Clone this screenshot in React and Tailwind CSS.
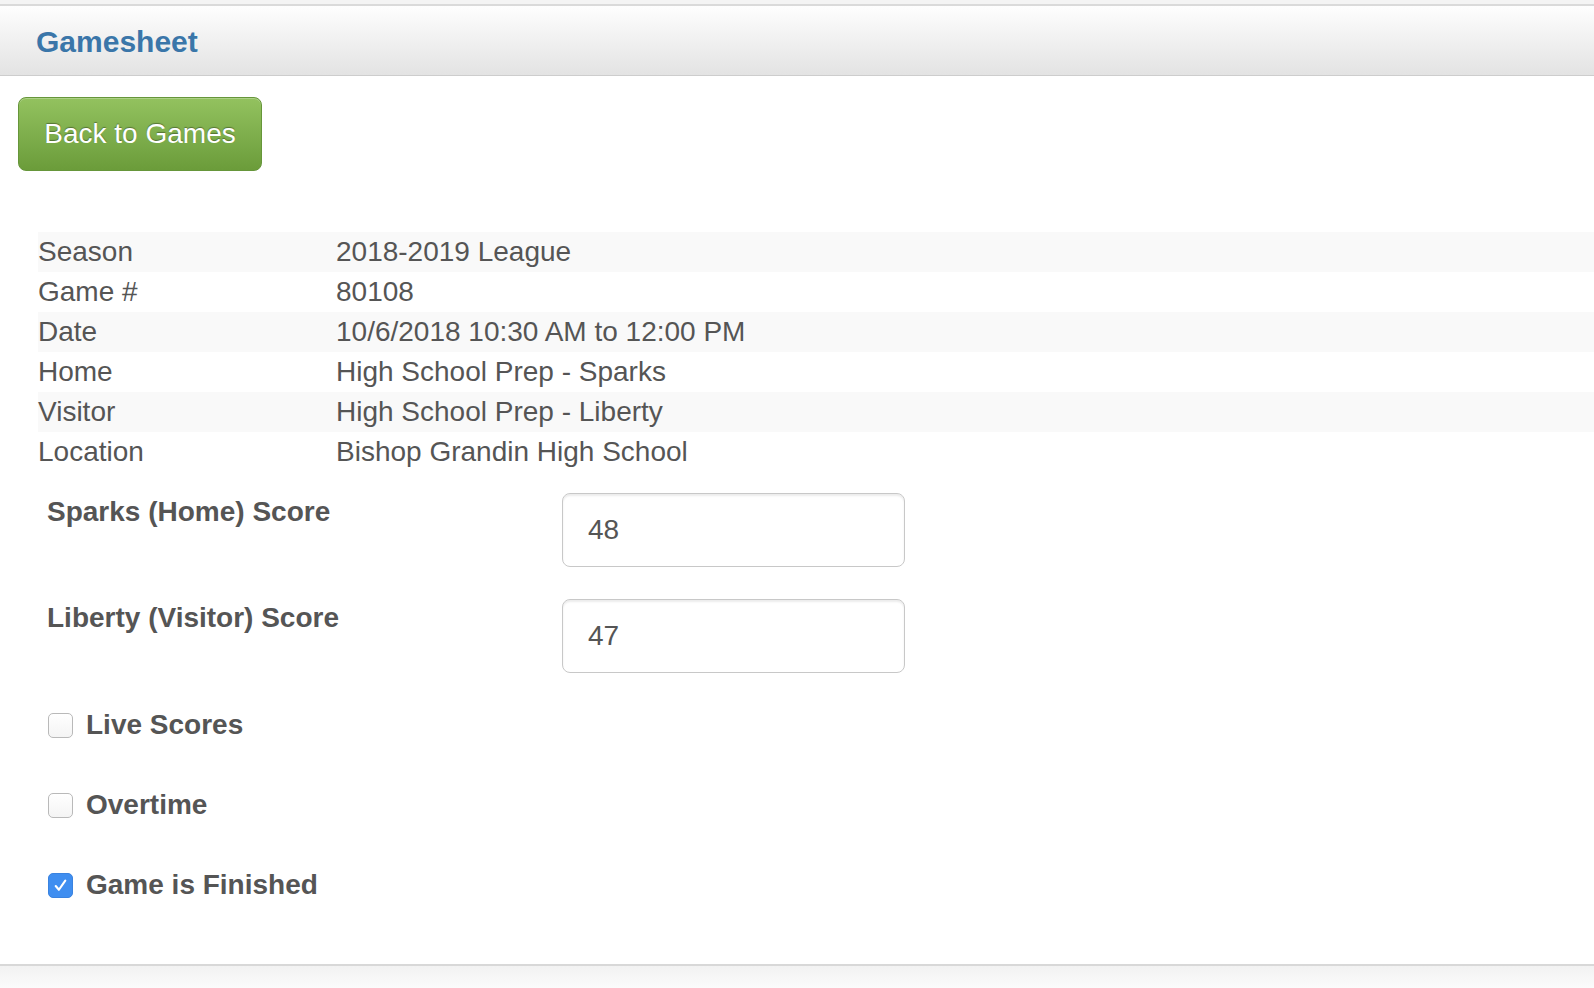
import React from 'react';

const details = [
  ['Season', '2018-2019 League'],
  ['Game #', '80108'],
  ['Date', '10/6/2018 10:30 AM to 12:00 PM'],
  ['Home', 'High School Prep - Sparks'],
  ['Visitor', 'High School Prep - Liberty'],
  ['Location', 'Bishop Grandin High School'],
];

const scores = [
  { label: 'Sparks (Home) Score', value: '48' },
  { label: 'Liberty (Visitor) Score', value: '47' },
];

const options = [
  { label: 'Live Scores', checked: false },
  { label: 'Overtime', checked: false },
  { label: 'Game is Finished', checked: true },
];

const CheckBox = ({ checked }) => {
  if (checked) {
    return (
      <span className="flex h-[25px] w-[25px] shrink-0 items-center justify-center rounded-[5px] bg-[#3f8ef0] border border-[#3a83e0]">
        <svg viewBox="0 0 16 16" className="h-[17px] w-[17px]" fill="none" stroke="white" strokeWidth="2" strokeLinecap="round" strokeLinejoin="round">
          <path d="M3.5 8.5l3 3.5L12.5 3.5" />
        </svg>
      </span>
    );
  }
  return (
    <span className="h-[25px] w-[25px] shrink-0 rounded-[5px] border border-[#b9b9b9] bg-gradient-to-b from-white to-[#f4f4f4]" />
  );
};

const App = () => {
  return (
    <div className="h-[988px] w-full overflow-hidden bg-white text-[#555] font-['Liberation_Sans',Arial,sans-serif]">
      <div className="h-[4px] bg-[#f4f4f4]" />
      <div className="flex h-[72px] items-center border-t-2 border-b border-t-[#dadada] border-b-[#cdcdcd] bg-gradient-to-b from-[#fefefe] to-[#e3e3e3] pl-[36px]">
        <h1 className="mt-[3px] text-[30px] font-bold leading-none text-[#3a76a9]">Gamesheet</h1>
      </div>

      <div className="pl-[18px] pt-[21px]">
        <button
          type="button"
          className="h-[74px] w-[244px] rounded-[8px] border border-[#66963a] bg-gradient-to-b from-[#93c25f] to-[#6b9c3a] text-[28px] text-white [text-shadow:0_-1px_1px_rgba(0,0,0,0.35)] shadow-[inset_0_1px_0_rgba(255,255,255,0.25)]"
        >
          Back to Games
        </button>
      </div>

      <div className="ml-[38px] mt-[61px]">
        {details.map(([label, value], i) => (
          <div key={label} className={`flex h-[40px] items-center text-[28px] ${i % 2 === 0 ? 'bg-[#f9f9f9]' : 'bg-white'}`}>
            <span className="w-[298px]">{label}</span>
            <span>{value}</span>
          </div>
        ))}
      </div>

      <div className="ml-[47px] mt-[20px] flex flex-col gap-[31px]">
        {scores.map((s) => (
          <div key={s.label} className="flex items-start">
            <label className="w-[515px] text-[28px] font-bold leading-[40px]">{s.label}</label>
            <div className="mt-[1px] flex h-[74px] w-[343px] items-center rounded-[8px] border border-[#c8c8c8] pl-[25px] text-[28px] shadow-[inset_0_2px_2px_rgba(0,0,0,0.08)]">
              {s.value}
            </div>
          </div>
        ))}
      </div>

      <div className="ml-[48px] mt-[32px] flex flex-col gap-[40px]">
        {options.map((o) => (
          <div key={o.label} className="flex h-[40px] items-center gap-[13px]">
            <CheckBox checked={o.checked} />
            <span className="text-[28px] font-bold">{o.label}</span>
          </div>
        ))}
      </div>

      <div className="mt-[59px] h-[24px] border-t-2 border-[#d8d8d8] bg-gradient-to-b from-[#f2f2f2] to-[#fbfbfb]" />
    </div>
  );
};

export default App;
